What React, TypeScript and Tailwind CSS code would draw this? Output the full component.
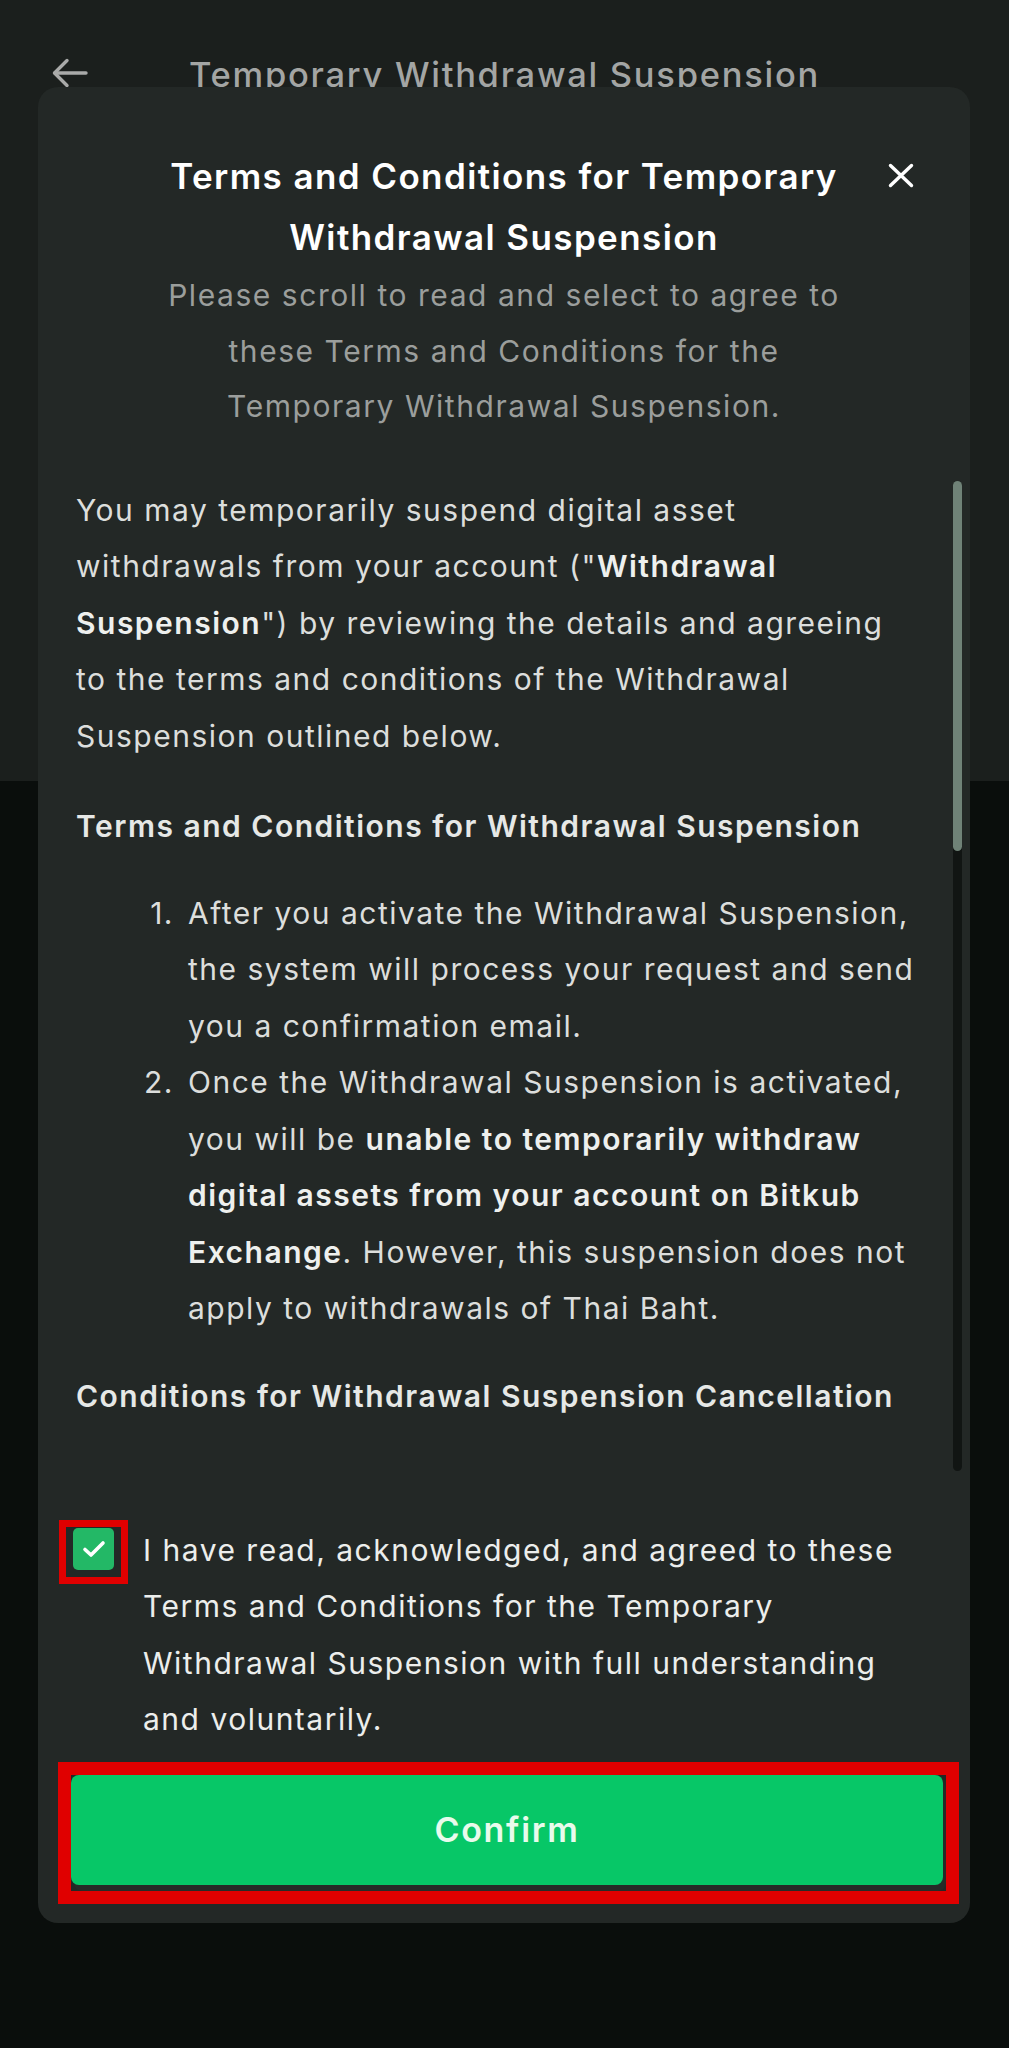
import React from "react";

function ArrowLeftIcon() {
  return (
    <svg width="36" height="30" viewBox="0 0 36 30" fill="none">
      <path d="M34 15H3" stroke="#a9aaa9" strokeWidth="3.4" strokeLinecap="round" />
      <path d="M15 2.5L2.5 15L15 27.5" stroke="#a9aaa9" strokeWidth="3.4" strokeLinecap="round" strokeLinejoin="round" />
    </svg>
  );
}

function CloseIcon() {
  return (
    <svg width="26" height="25" viewBox="0 0 26 25" fill="none">
      <path d="M2.5 2.5L23.5 22.5M23.5 2.5L2.5 22.5" stroke="#ffffff" strokeWidth="3.4" strokeLinecap="round" />
    </svg>
  );
}

function CheckIcon() {
  return (
    <svg width="24" height="18" viewBox="0 0 24 18" fill="none">
      <path d="M3 9.5L9 15L21 3" stroke="#ffffff" strokeWidth="3.6" strokeLinecap="round" strokeLinejoin="round" />
    </svg>
  );
}

const B = ({ children }: { children: React.ReactNode }) => (
  <span className="font-semibold text-[#eef0ee]">{children}</span>
);

export default function App() {
  return (
    <div className="relative w-[1009px] h-[2048px] overflow-hidden bg-[#0a0e0c] font-['Inter','Noto_Sans',sans-serif]">
      {/* Underlying page */}
      <div className="h-[781px] bg-[#1b1f1d]">
        <div className="grid grid-cols-[87px_1fr_87px] pt-[58px]">
          <div className="pl-[52px]">
            <ArrowLeftIcon />
          </div>
          <div className="text-center text-[34.5px] leading-[34px] tracking-[0.05em] font-medium text-[#a3a5a4] whitespace-nowrap">
            Temporary Withdrawal Suspension
          </div>
          <div />
        </div>
      </div>

      {/* Modal */}
      <div className="absolute left-[38px] top-[87px] w-[932px] h-[1836px] rounded-[20px] bg-[#232826] flex flex-col">
        <div className="absolute top-[76px] right-[56px]">
          <CloseIcon />
        </div>

        <div className="pt-[59px] text-center">
          <h2 className="text-[35px] leading-[61px] tracking-[0.04em] font-semibold text-white whitespace-nowrap">
            Terms and Conditions for Temporary
            <br />
            Withdrawal Suspension
          </h2>
          <p className="text-[30px] leading-[55.5px] tracking-[1.55px] text-[#9b9e9c] whitespace-nowrap">
            Please scroll to read and select to agree to
            <br />
            these Terms and Conditions for the
            <br />
            Temporary Withdrawal Suspension.
          </p>
        </div>

        {/* Scroll area */}
        <div className="mt-[46px] h-[990px] flex">
          <div className="flex-1 overflow-hidden pl-[38px] pt-[1px] text-[30px] leading-[56.5px] tracking-[0.05em] text-[#dcdedc] whitespace-nowrap">
            <p>
              You may temporarily suspend digital asset
              <br />
              withdrawals from your account (&quot;<B>Withdrawal</B>
              <br />
              <B>Suspension</B>&quot;) by reviewing the details and agreeing
              <br />
              to the terms and conditions of the Withdrawal
              <br />
              Suspension outlined below.
            </p>
            <h3 className="mt-[34px] font-semibold text-[#e6e8e6]">
              Terms and Conditions for Withdrawal Suspension
            </h3>
            <ol className="mt-[30px] pl-[58px] flex flex-col">
              <li className="flex">
                <span className="w-[40px] text-right">1.</span>
                <span className="ml-[14px]">
                  After you activate the Withdrawal Suspension,
                  <br />
                  the system will process your request and send
                  <br />
                  you a confirmation email.
                </span>
              </li>
              <li className="flex">
                <span className="w-[40px] text-right">2.</span>
                <span className="ml-[14px]">
                  Once the Withdrawal Suspension is activated,
                  <br />
                  you will be <B>unable to temporarily withdraw</B>
                  <br />
                  <B>digital assets from your account on Bitkub</B>
                  <br />
                  <B>Exchange</B>. However, this suspension does not
                  <br />
                  apply to withdrawals of Thai Baht.
                </span>
              </li>
            </ol>
            <h3 className="mt-[31px] font-semibold text-[#e6e8e6]">
              Conditions for Withdrawal Suspension Cancellation
            </h3>
          </div>
          <div className="w-[9px] mr-[8px] h-full flex flex-col rounded-full bg-[#111513]">
            <div className="h-[370px] rounded-full bg-[#6f8277]" />
          </div>
        </div>

        {/* Checkbox row */}
        <div className="mt-[49px] pl-[21px] flex items-start">
          <div className="w-[69px] h-[64px] shrink-0 border-[7px] border-[#e00000] pl-[7px] pt-[1px]">
            <div className="w-[41px] h-[42px] rounded-[5px] bg-[#23b866] flex items-center justify-center">
              <CheckIcon />
            </div>
          </div>
          <p className="ml-[15px] mt-[2px] text-[30px] leading-[56.5px] tracking-[0.05em] text-[#eceeec] whitespace-nowrap">
            I have read, acknowledged, and agreed to these
            <br />
            Terms and Conditions for the Temporary
            <br />
            Withdrawal Suspension with full understanding
            <br />
            and voluntarily.
          </p>
        </div>

        {/* Confirm button */}
        <div className="mt-[14px] ml-[20px] w-[901px] h-[142px] border-[13px] border-[#e00000]">
          <button className="w-[872px] h-[110px] rounded-[8px] bg-[#07c767] shadow-[3px_6px_0_#262b28] text-[34px] tracking-[0.05em] font-semibold text-[#e8fbec]">
            Confirm
          </button>
        </div>
      </div>
    </div>
  );
}
